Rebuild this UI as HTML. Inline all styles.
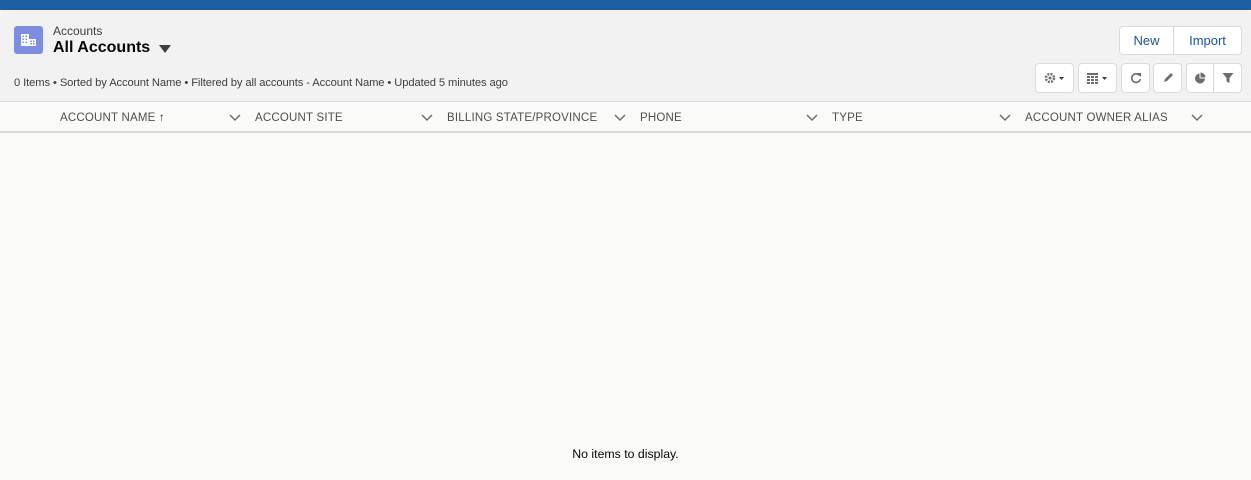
<!DOCTYPE html>
<html><head><meta charset="utf-8"><style>
*{box-sizing:border-box;margin:0;padding:0}
body{width:1251px;height:480px;overflow:hidden;background:#fafaf9;font-family:"Liberation Sans",sans-serif;color:#080707;position:relative}
.top{position:absolute;left:0;top:0;width:1251px;height:10px;background:#1e5fa3}
.head{position:absolute;left:0;top:10px;width:1251px;height:92px;background:#f3f2f2;border-top-left-radius:4px;border-top-right-radius:4px;border-bottom:1px solid #dddbda}
.icon{position:absolute;left:14px;top:26px;width:29px;height:28px;background:#7f8de1;border-radius:3px}
.t1{position:absolute;left:53px;top:24px;font-size:12px;color:#3e3e3c}
.t2{position:absolute;left:53px;top:39px;font-size:16px;font-weight:bold;color:#080707}
.tri{position:absolute;left:159px;top:45px;width:0;height:0;border-left:6px solid transparent;border-right:6px solid transparent;border-top:8px solid #3e3e3c}
.meta{position:absolute;left:14px;top:76px;font-size:11.2px;color:#3e3e3c;letter-spacing:-0.1px}
.btn{position:absolute;background:#fff;border:1px solid #dddbda;border-radius:4px;font-size:13px;color:#1b5297;display:flex;align-items:center;justify-content:center}
.sm{height:30px;top:63px}
.th{position:absolute;top:102px;height:31px;width:1251px;border-bottom:2px solid #dddbda;background:#fafaf9}
.c{position:absolute;top:9px;font-size:11.5px;color:#514f4d;letter-spacing:0.2px}
.chev{position:absolute;top:9px;width:12px;height:12px}
.empty{position:absolute;top:447px;left:0;width:1251px;text-align:center;font-size:12.3px;color:#080707}
</style></head><body>
<div class="top"></div>
<div class="head"></div>
<div class="icon"><svg width="29" height="28"><g fill="#fff"><rect x="7" y="8" width="8" height="12"/><rect x="15" y="13" width="7" height="7"/></g><g fill="#7f8de1"><rect x="8.5" y="9.5" width="1.5" height="1.5"/><rect x="11.5" y="9.5" width="1.5" height="1.5"/><rect x="8.5" y="12.5" width="1.5" height="1.5"/><rect x="11.5" y="12.5" width="1.5" height="1.5"/><rect x="8.5" y="15.5" width="1.5" height="1.5"/><rect x="11.5" y="15.5" width="1.5" height="1.5"/><rect x="16.5" y="14.5" width="1.5" height="1.5"/><rect x="19" y="14.5" width="1.5" height="1.5"/><rect x="16.5" y="17" width="1.5" height="1.5"/><rect x="19" y="17" width="1.5" height="1.5"/></g></svg></div>
<div class="t1">Accounts</div>
<div class="t2">All Accounts</div>
<div class="tri"></div>
<div class="meta" style="top:77px">0 Items • Sorted by Account Name • Filtered by all accounts - Account Name • Updated 5 minutes ago</div>
<div class="btn" style="left:1119px;top:26px;width:55px;height:29px;border-radius:4px 0 0 4px">New</div>
<div class="btn" style="left:1173px;top:26px;width:69px;height:29px;border-radius:0 4px 4px 0">Import</div>
<div class="btn sm" style="left:1035px;width:39px"><svg width="22" height="12"><circle cx="6" cy="6" r="4" fill="none" stroke="#706e6b" stroke-width="2.5" stroke-dasharray="2 1.2"/><circle cx="6" cy="6" r="1.5" fill="#706e6b"/><path d="M15 5h5l-2.5 3z" fill="#3e3e3c"/></svg></div>
<div class="btn sm" style="left:1078px;width:39px"><svg width="24" height="12"><g fill="#706e6b"><rect x="1" y="1" width="11" height="2"/><rect x="1" y="4" width="3" height="2"/><rect x="5" y="4" width="3" height="2"/><rect x="9" y="4" width="3" height="2"/><rect x="1" y="7" width="3" height="2"/><rect x="5" y="7" width="3" height="2"/><rect x="9" y="7" width="3" height="2"/><rect x="1" y="10" width="3" height="2"/><rect x="5" y="10" width="3" height="2"/><rect x="9" y="10" width="3" height="2"/></g><path d="M16 5h5l-2.5 3z" fill="#3e3e3c"/></svg></div>
<div class="btn sm" style="left:1121px;width:29px"><svg width="12" height="12"><path d="M9.5 3.5A4.3 4.3 0 1 0 10.3 7" fill="none" stroke="#706e6b" stroke-width="1.6"/><path d="M7 1h4v4z" fill="#706e6b"/></svg></div>
<div class="btn sm" style="left:1153px;width:29px"><svg width="12" height="12"><path d="M2 10l1-3 6-6 2 2-6 6z" fill="#706e6b"/></svg></div>
<div class="btn sm" style="left:1186px;width:28px;border-radius:4px 0 0 4px"><svg width="12" height="12"><path d="M5.5 1.5A5 5 0 1 0 11 6.5H5.5z" fill="#706e6b"/><path d="M6.5 0.5v5h5a5 5 0 0 0-5-5z" fill="#706e6b"/></svg></div>
<div class="btn sm" style="left:1213px;width:29px;border-radius:0 4px 4px 0"><svg width="12" height="12"><path d="M0.5 1h11l-4 5v5l-3-1.5V6z" fill="#706e6b"/></svg></div>
<div class="th">
<div class="c" style="left:60px;top:10px">ACCOUNT NAME <span style="color:#16325c;font-weight:bold">&#8593;</span></div>
<div class="c" style="left:255px;top:10px">ACCOUNT SITE</div>
<div class="c" style="left:447px;top:10px">BILLING STATE/PROVINCE</div>
<div class="c" style="left:640px;top:10px">PHONE</div>
<div class="c" style="left:832px;top:10px">TYPE</div>
<div class="c" style="left:1025px;top:10px">ACCOUNT OWNER ALIAS</div>
<svg class="chev" style="left:229px"><path d="M1 4l5 5 5-5" fill="none" stroke="#706e6b" stroke-width="1.5"/></svg>
<svg class="chev" style="left:421px"><path d="M1 4l5 5 5-5" fill="none" stroke="#706e6b" stroke-width="1.5"/></svg>
<svg class="chev" style="left:614px"><path d="M1 4l5 5 5-5" fill="none" stroke="#706e6b" stroke-width="1.5"/></svg>
<svg class="chev" style="left:806px"><path d="M1 4l5 5 5-5" fill="none" stroke="#706e6b" stroke-width="1.5"/></svg>
<svg class="chev" style="left:999px"><path d="M1 4l5 5 5-5" fill="none" stroke="#706e6b" stroke-width="1.5"/></svg>
<svg class="chev" style="left:1191px"><path d="M1 4l5 5 5-5" fill="none" stroke="#706e6b" stroke-width="1.5"/></svg>
</div>
<div class="empty">No items to display.</div>
</body></html>
